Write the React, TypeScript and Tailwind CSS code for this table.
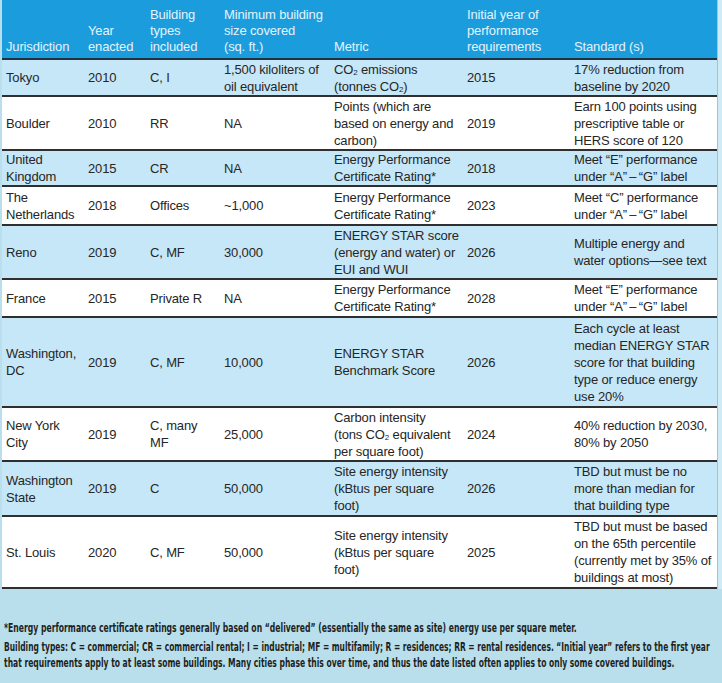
import React from "react";

const Sub = () => <sub className="text-[8px] leading-none relative top-[1px]">2</sub>;

type Row = { h: string; bg: string; c: React.ReactNode[] };

const L = (...lines: React.ReactNode[]) => (
  <>
    {lines.map((l, i) => (
      <div key={i}>{l}</div>
    ))}
  </>
);

const rows: Row[] = [
  {
    h: "h-[37px]",
    bg: "bg-[#c6e7f7]",
    c: [
      "Tokyo",
      "2010",
      "C, I",
      L("1,500 kiloliters of", "oil equivalent"),
      L(<>CO<Sub /> emissions</>, <>(tonnes CO<Sub />)</>),
      "2015",
      L("17% reduction from", "baseline by 2020"),
    ],
  },
  {
    h: "h-[54px]",
    bg: "bg-white",
    c: [
      "Boulder",
      "2010",
      "RR",
      "NA",
      L("Points (which are", "based on energy and", "carbon)"),
      "2019",
      L("Earn 100 points using", "prescriptive table or", "HERS score of 120"),
    ],
  },
  {
    h: "h-[36px]",
    bg: "bg-[#c6e7f7]",
    c: [
      L("United", "Kingdom"),
      "2015",
      "CR",
      "NA",
      L("Energy Performance", "Certificate Rating*"),
      "2018",
      L("Meet \u201CE\u201D performance", "under \u201CA\u201D\u2009\u2013\u2009\u201CG\u201D label"),
    ],
  },
  {
    h: "h-[39px]",
    bg: "bg-white",
    c: [
      L("The", "Netherlands"),
      "2018",
      "Offices",
      "~1,000",
      L("Energy Performance", "Certificate Rating*"),
      "2023",
      L("Meet \u201CC\u201D performance", "under \u201CA\u201D\u2009\u2013\u2009\u201CG\u201D label"),
    ],
  },
  {
    h: "h-[54px]",
    bg: "bg-[#c6e7f7]",
    c: [
      "Reno",
      "2019",
      "C, MF",
      "30,000",
      L("ENERGY STAR score", "(energy and water) or", "EUI and WUI"),
      "2026",
      L("Multiple energy and", "water options\u2014see text"),
    ],
  },
  {
    h: "h-[38px]",
    bg: "bg-white",
    c: [
      "France",
      "2015",
      "Private R",
      "NA",
      L("Energy Performance", "Certificate Rating*"),
      "2028",
      L("Meet \u201CE\u201D performance", "under \u201CA\u201D\u2009\u2013\u2009\u201CG\u201D label"),
    ],
  },
  {
    h: "h-[90px]",
    bg: "bg-[#c6e7f7]",
    c: [
      L("Washington,", "DC"),
      "2019",
      "C, MF",
      "10,000",
      L("ENERGY STAR", "Benchmark Score"),
      "2026",
      L(
        "Each cycle at least",
        "median ENERGY STAR",
        "score for that building",
        "type or reduce energy",
        "use 20%"
      ),
    ],
  },
  {
    h: "h-[54px]",
    bg: "bg-white",
    c: [
      L("New York", "City"),
      "2019",
      L("C, many", "MF"),
      "25,000",
      L("Carbon intensity", <>(tons CO<Sub /> equivalent</>, "per square foot)"),
      "2024",
      L("40% reduction by 2030,", "80% by 2050"),
    ],
  },
  {
    h: "h-[55px]",
    bg: "bg-[#c6e7f7]",
    c: [
      L("Washington", "State"),
      "2019",
      "C",
      "50,000",
      L("Site energy intensity", "(kBtus per square", "foot)"),
      "2026",
      L("TBD but must be no", "more than median for", "that building type"),
    ],
  },
  {
    h: "h-[72px]",
    bg: "bg-white",
    c: [
      "St. Louis",
      "2020",
      "C, MF",
      "50,000",
      L("Site energy intensity", "(kBtus per square", "foot)"),
      "2025",
      L(
        "TBD but must be based",
        "on the 65th percentile",
        "(currently met by 35% of",
        "buildings at most)"
      ),
    ],
  },
];

const widths = ["w-[82px]", "w-[62px]", "w-[74px]", "w-[110px]", "w-[133px]", "w-[107px]", "w-[147px]"];

export default function App() {
  return (
    <div
      className="w-[722px] h-[683px] bg-[#b8dfeb] overflow-hidden text-[#262626]"
      style={{ fontFamily: '"Liberation Sans", Arial, sans-serif' }}
    >
      <div className="flex">
        <div className="w-[717px] pl-[2px]">
          <table className="table-fixed border-collapse w-[715px] text-[13px] leading-[17px] tracking-[-0.15px]">
            <colgroup>
              {widths.map((w, i) => (
                <col key={i} className={w} />
              ))}
            </colgroup>
            <thead>
              <tr className="h-[59px] bg-[#1b9cdd] text-[#e3f3fb] border-b-2 border-[#233240] leading-[16px]">
                <th className="font-normal text-left align-bottom pl-[4px] pb-[3px]">Jurisdiction</th>
                <th className="font-normal text-left align-bottom pl-[4px] pb-[3px]">
                  {L("Year", "enacted")}
                </th>
                <th className="font-normal text-left align-bottom pl-[4px] pb-[3px]">
                  {L("Building", "types", "included")}
                </th>
                <th className="font-normal text-left align-bottom pl-[4px] pb-[3px] whitespace-nowrap">
                  {L("Minimum building", "size covered", "(sq. ft.)")}
                </th>
                <th className="font-normal text-left align-bottom pl-[4px] pb-[3px]">Metric</th>
                <th className="font-normal text-left align-bottom pl-[4px] pb-[3px] whitespace-nowrap">
                  {L("Initial year of", "performance", "requirements")}
                </th>
                <th className="font-normal text-left align-bottom pl-[4px] pb-[3px]">Standard (s)</th>
              </tr>
            </thead>
            <tbody>
              {rows.map((r, i) => (
                <tr key={i} className={`${r.h} ${r.bg} border-b-2 border-[#2f2f2f]`}>
                  {r.c.map((c, j) => (
                    <td key={j} className="align-middle pl-[4px] whitespace-nowrap p-0">
                      {c}
                    </td>
                  ))}
                </tr>
              ))}
            </tbody>
          </table>
        </div>
        <div className="w-[5px] bg-[#cfebf5] border-l border-[#8ccbe6]" />
      </div>
      <div
        className="pt-[31px] pl-[4px] text-[11.5px] leading-[16px] font-bold text-[#1f1f1f] whitespace-nowrap"
        style={{ fontFamily: '"DejaVu Sans Condensed", "Liberation Sans", sans-serif' }}
      >
        <div className="mb-[3px] origin-left scale-x-[0.743]">
          *Energy performance certificate ratings generally based on &ldquo;delivered&rdquo; (essentially the same as site) energy use per square meter.
        </div>
        <div className="origin-left scale-x-[0.726]">
          Building types: C = commercial; CR = commercial rental; I = industrial; MF = multifamily; R = residences; RR = rental residences. &ldquo;Initial year&rdquo; refers to the first year
        </div>
        <div className="origin-left scale-x-[0.734]">
          that requirements apply to at least some buildings. Many cities phase this over time, and thus the date listed often applies to only some covered buildings.
        </div>
      </div>
    </div>
  );
}
